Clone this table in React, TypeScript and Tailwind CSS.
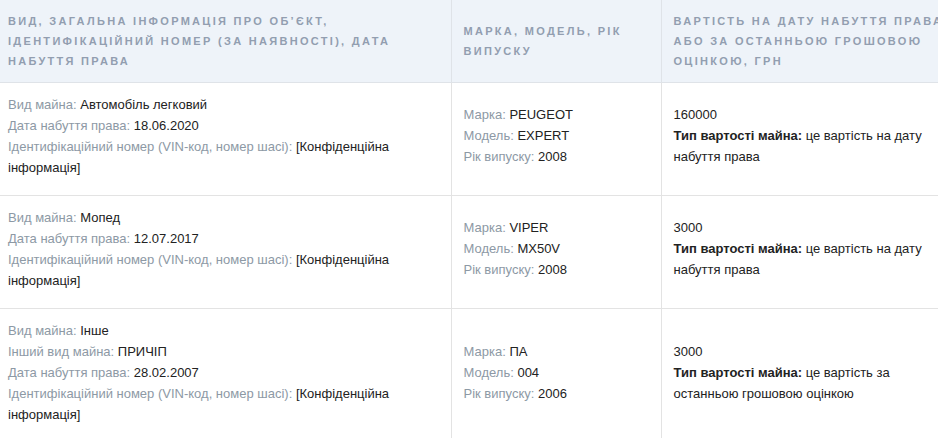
const rows = [
  {
    left: [
      ["Вид майна:", "Автомобіль легковий"],
      ["Дата набуття права:", "18.06.2020"],
      ["Ідентифікаційний номер (VIN-код, номер шасі):", "[Конфіденційна інформація]"],
    ],
    brand: "PEUGEOT",
    model: "EXPERT",
    year: "2008",
    price: "160000",
    kind: "це вартість на дату набуття права",
  },
  {
    left: [
      ["Вид майна:", "Мопед"],
      ["Дата набуття права:", "12.07.2017"],
      ["Ідентифікаційний номер (VIN-код, номер шасі):", "[Конфіденційна інформація]"],
    ],
    brand: "VIPER",
    model: "MX50V",
    year: "2008",
    price: "3000",
    kind: "це вартість на дату набуття права",
  },
  {
    left: [
      ["Вид майна:", "Інше"],
      ["Інший вид майна:", "ПРИЧІП"],
      ["Дата набуття права:", "28.02.2007"],
      ["Ідентифікаційний номер (VIN-код, номер шасі):", "[Конфіденційна інформація]"],
    ],
    brand: "ПА",
    model: "004",
    year: "2006",
    price: "3000",
    kind: "це вартість за останньою грошовою оцінкою",
  },
];

function Line({ label, value }: { label: string; value: string }) {
  return (
    <div>
      <span className="text-[#8d99a5]">{label}</span> <span className="text-[#222]">{value}</span>
    </div>
  );
}

export default function App() {
  return (
    <div className="h-[438px] w-[938px] overflow-hidden bg-white font-['Liberation_Sans',Arial,sans-serif]">
      <table className="w-[962px] table-fixed border-collapse">
        <colgroup>
          <col className="w-[451px]" />
          <col className="w-[210px]" />
          <col className="w-[301px]" />
        </colgroup>
        <thead>
          <tr className="h-[82px] bg-[#eef3f9] text-left align-middle text-[11px] font-bold uppercase leading-[20px] tracking-[2.3px] text-[#929eb0]">
            <th className="border-r border-b border-[#dfe3e8] pl-2 pr-2 font-bold">
              Вид, загальна інформація про об’єкт, ідентифікаційний номер (за наявності), дата набуття права
            </th>
            <th className="border-r border-b border-[#dfe3e8] px-3 font-bold">Марка, модель, рік випуску</th>
            <th className="border-b border-[#dfe3e8] px-3 font-bold">
              Вартість на дату набуття права або за останньою грошовою оцінкою, грн
            </th>
          </tr>
        </thead>
        <tbody>
          {rows.map((r, i) => (
            <tr key={i} className="align-middle text-[13px] leading-[21px] text-[#222]">
              <td className="border-r border-b border-[#e3e3e3] pt-[11px] pb-[17px] pl-2 pr-2">
                {r.left.map(([l, v]) => (
                  <Line key={l} label={l} value={v} />
                ))}
              </td>
              <td className="border-r border-b border-[#e3e3e3] px-3 pt-[11px] pb-[17px]">
                <Line label="Марка:" value={r.brand} />
                <Line label="Модель:" value={r.model} />
                <Line label="Рік випуску:" value={r.year} />
              </td>
              <td className="border-b border-[#e3e3e3] px-3 pt-[11px] pb-[17px]">
                <div>{r.price}</div>
                <div>
                  <span className="font-bold">Тип вартості майна:</span> {r.kind}
                </div>
              </td>
            </tr>
          ))}
        </tbody>
      </table>
    </div>
  );
}
